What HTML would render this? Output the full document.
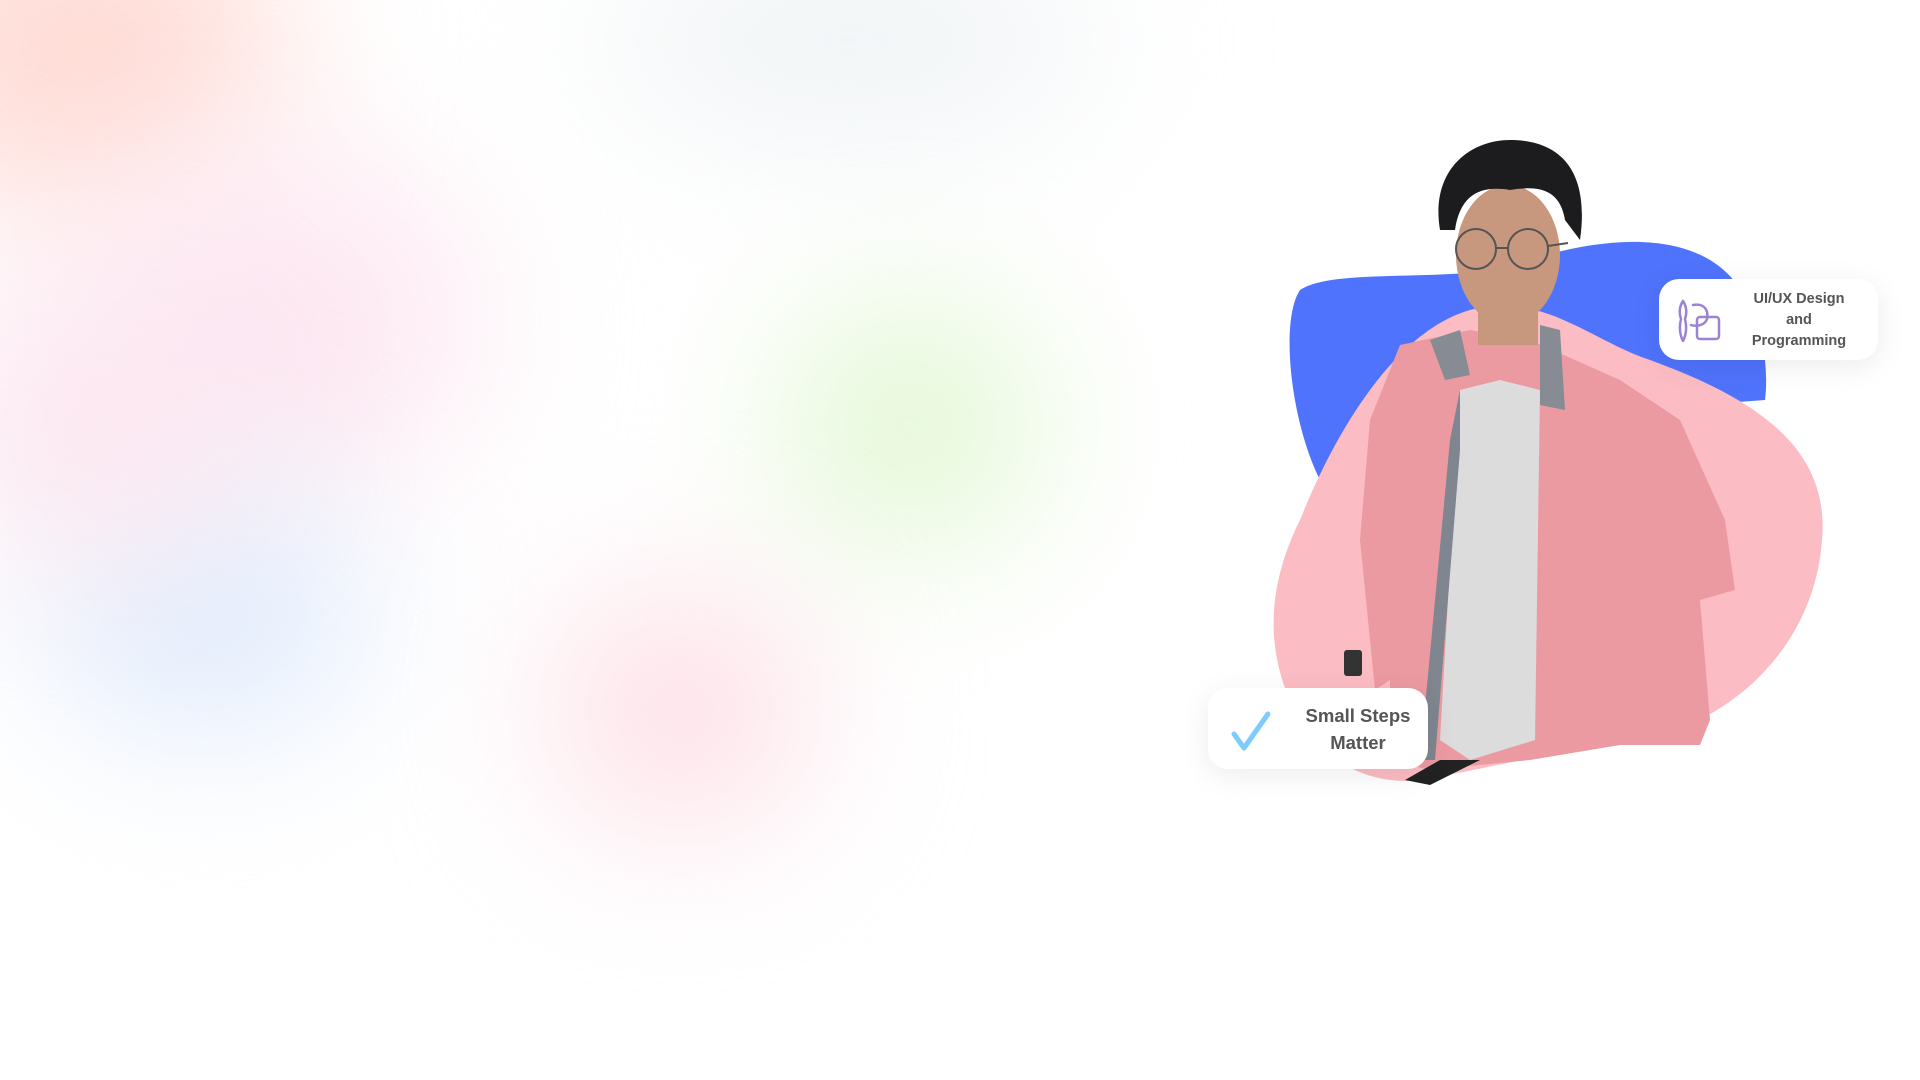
<!DOCTYPE html>
<html><head><meta charset="utf-8"><style>
html,body{margin:0;width:1920px;height:1080px;overflow:hidden;background:#fff;font-family:"Liberation Sans",sans-serif}
.b{position:absolute;border-radius:50%;filter:blur(80px)}
.card{position:absolute;background:#fff;border-radius:20px;box-shadow:0 6px 30px rgba(0,0,0,.08);color:#555;font-weight:bold;text-align:center}
</style></head><body>
<div class="b" style="left:-120px;top:-120px;width:400px;height:330px;background:#ffdcd6"></div>
<div class="b" style="left:60px;top:150px;width:420px;height:340px;background:#fde8f2"></div>
<div class="b" style="left:40px;top:480px;width:330px;height:260px;background:#e2ecfc"></div>
<div class="b" style="left:-60px;top:300px;width:300px;height:250px;background:#fce6f0"></div>
<div class="b" style="left:780px;top:300px;width:260px;height:250px;background:#e2f7d4"></div>
<div class="b" style="left:550px;top:590px;width:260px;height:240px;background:#fddfe6"></div>
<div class="b" style="left:600px;top:-60px;width:500px;height:200px;background:#f0f4f6"></div>
<svg style="position:absolute;left:0;top:0" width="1920" height="1080">
<path d="M1300 290 C1330 270 1420 280 1500 270 C1580 240 1660 230 1710 260 C1760 290 1770 360 1765 400 L1500 420 L1320 480 C1290 420 1280 320 1300 290Z" fill="#4f73fc"/>
<path d="M1300 520 C1340 420 1400 330 1470 310 C1540 290 1590 340 1650 360 C1760 400 1830 450 1822 540 C1815 640 1740 720 1640 740 C1560 750 1480 770 1420 780 C1380 785 1330 770 1300 720 C1260 650 1270 580 1300 520Z" fill="#fcbcc3"/>
<path d="M1400 345 L1470 330 L1530 340 L1620 380 L1680 420 L1725 520 L1735 590 L1700 600 L1710 720 L1700 745 L1620 745 L1530 760 L1430 770 L1390 760 L1390 680 L1375 690 L1360 540 L1370 420 Z" fill="#ec9aa2"/>
<path d="M1460 390 L1500 380 L1540 390 L1535 740 L1470 760 L1440 740 Z" fill="#dcdcdc"/>
<path d="M1430 340 L1460 330 L1470 375 L1445 380 Z M1540 325 L1560 330 L1565 410 L1540 405 Z" fill="#868b94"/>
<path d="M1460 390 L1450 440 L1420 760 L1435 760 L1460 450 Z" fill="#7f8690"/>
<path d="M1405 780 L1440 760 L1480 760 L1430 785 Z" fill="#222"/>
<ellipse cx="1508" cy="255" rx="52" ry="70" fill="#c8987e"/>
<rect x="1478" y="300" width="60" height="45" fill="#c8987e"/>
<path d="M1440 230 C1430 170 1470 140 1510 140 C1560 140 1590 170 1580 240 L1565 220 C1560 190 1540 185 1510 190 C1480 185 1460 195 1455 230 Z" fill="#1c1c1e"/>
<circle cx="1476" cy="249" r="20" fill="none" stroke="#555" stroke-width="2"/>
<circle cx="1528" cy="249" r="20" fill="none" stroke="#555" stroke-width="2"/>
<path d="M1496 248 L1508 248 M1548 246 L1568 243" stroke="#555" stroke-width="2"/>
<rect x="1344" y="650" width="18" height="26" rx="3" fill="#333"/>
</svg>
<div class="card" style="left:1659px;top:279px;width:219px;height:81px">
<svg style="position:absolute;left:18px;top:18px" width="48" height="46" viewBox="0 0 48 46"><g fill="none" stroke="#9b82d6" stroke-width="2.5" stroke-linecap="round" stroke-linejoin="round"><path d="M6 4 C2 10 2 16 4 22 C2 30 3 38 6 44 C9 38 10 30 8 22 C10 16 10 10 6 4Z"/><path d="M16 8 C26 6 32 12 30 22 C28 28 20 30 14 28"/><rect x="20" y="20" width="22" height="22" rx="3"/></g></svg>
<div style="position:absolute;left:75px;width:130px;top:10px;font-size:14.5px;line-height:21px">UI/UX Design<br>and<br>Programming</div></div>
<div class="card" style="left:1208px;top:688px;width:220px;height:81px">
<svg style="position:absolute;left:22px;top:20px" width="44" height="44" viewBox="0 0 44 44"><path d="M4 26 L14 40 L38 6" fill="none" stroke="#7ecbff" stroke-width="5" stroke-linecap="round" stroke-linejoin="round"/></svg>
<div style="position:absolute;left:90px;width:120px;top:14px;font-size:18.5px;line-height:27px">Small Steps<br>Matter</div></div>
</body></html>
